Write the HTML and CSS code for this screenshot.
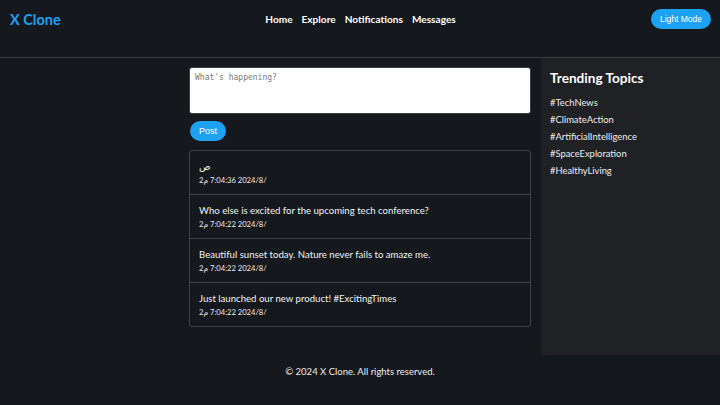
FILE: index.html
```html
<!DOCTYPE html>
<html lang="en">
<head>
<meta charset="utf-8">
<title>X Clone</title>
<link rel="stylesheet" href="styles.css">
</head>
<body>
<header class="header">
  <div class="logo">X Clone</div>
  <nav class="nav">
    <a href="#">Home</a>
    <a href="#">Explore</a>
    <a href="#">Notifications</a>
    <a href="#">Messages</a>
  </nav>
  <div class="header-right"><button class="mode-btn">Light Mode</button></div>
</header>
<main class="layout">
  <div class="spacer"></div>
  <section class="feed">
    <textarea class="composer" placeholder="What's happening?"></textarea>
    <button class="post-btn">Post</button>
    <div class="posts">
      <div class="post">
        <div class="post-text">ص</div>
        <div class="post-time"><bdo dir="ltr">2م 7:04:36 2024/8/</bdo></div>
      </div>
      <div class="post">
        <div class="post-text">Who else is excited for the upcoming tech conference?</div>
        <div class="post-time"><bdo dir="ltr">2م 7:04:22 2024/8/</bdo></div>
      </div>
      <div class="post">
        <div class="post-text">Beautiful sunset today. Nature never fails to amaze me.</div>
        <div class="post-time"><bdo dir="ltr">2م 7:04:22 2024/8/</bdo></div>
      </div>
      <div class="post">
        <div class="post-text">Just launched our new product! #ExcitingTimes</div>
        <div class="post-time"><bdo dir="ltr">2م 7:04:22 2024/8/</bdo></div>
      </div>
    </div>
  </section>
  <aside class="sidebar">
    <h2 class="sidebar-title">Trending Topics</h2>
    <ul class="topics">
      <li>#TechNews</li>
      <li>#ClimateAction</li>
      <li>#ArtificialIntelligence</li>
      <li>#SpaceExploration</li>
      <li>#HealthyLiving</li>
    </ul>
  </aside>
</main>
<footer class="footer">© 2024 X Clone. All rights reserved.</footer>
</body>
</html>
```

FILE: styles.css
```css
* { box-sizing: border-box; }
html, body { margin: 0; padding: 0; }
body {
  background: #15181c;
  color: #e7e9ea;
  font-family: Lato, "DejaVu Sans", sans-serif;
  width: 720px;
  height: 405px;
  overflow: hidden;
}
.header {
  height: 58px;
  border-bottom: 1px solid #3a3d41;
  display: grid;
  grid-template-columns: 1fr auto 1fr;
  align-items: start;
  padding: 9px 9px 0 10px;
}
.logo {
  color: #1da1f2;
  font-weight: 700;
  font-size: 14.5px;
  line-height: 21px;
}
.nav {
  display: flex;
  gap: 9px;
  line-height: 20px;
}
.nav a {
  color: #fff;
  text-decoration: none;
  font-weight: 700;
  font-size: 10.1px;
}
.header-right { display: flex; justify-content: flex-end; }
.mode-btn {
  background: #1da1f2;
  color: #fff;
  border: none;
  border-radius: 10px;
  height: 20px;
  padding: 0 9px;
  font-family: "Liberation Sans", Arial, sans-serif;
  font-size: 8.5px;
}
.layout {
  display: grid;
  grid-template-columns: 179px 342px 1fr;
  column-gap: 10px;
  align-items: start;
}
.feed {
  padding-top: 9px;
  display: flex;
  flex-direction: column;
  align-items: flex-start;
}
.composer {
  width: 342px;
  height: 47px;
  border: 1px solid #3a3d41;
  border-radius: 3px;
  background: #fff;
  padding: 5px;
  resize: none;
  font-family: "DejaVu Sans Mono", monospace;
  font-size: 8px;
  display: block;
}
.composer::placeholder { color: #777; }
.post-btn {
  margin-top: 7px;
  background: #1da1f2;
  color: #fff;
  border: none;
  border-radius: 10px;
  height: 20px;
  padding: 0 9px;
  font-family: "Liberation Sans", Arial, sans-serif;
  font-size: 9px;
  margin-left: 1px;
}
.posts {
  margin-top: 9px;
  width: 342px;
  border: 1px solid #3e434a;
  border-radius: 3px;
}
.post {
  height: 44px;
  padding: 9px 9px 0 9px;
  border-bottom: 1px solid #3e434a;
}
.post:last-child { border-bottom: none; height: 43px; }
.post-text { font-size: 9.6px; line-height: 14px; color: #f2f4f5; }
.post-time { font-size: 7.6px; line-height: 12px; color: #eceef0; }
.sidebar {
  background: #1f2124;
  height: 297px;
  border-radius: 0 0 0 4px;
  padding: 11px 9px;
}
.sidebar-title {
  margin: 0;
  font-size: 13.6px;
  font-weight: 700;
  color: #fff;
  line-height: 18px;
}
.topics {
  list-style: none;
  margin: 7px 0 0 0;
  padding: 0;
}
.topics li {
  font-size: 9.4px;
  line-height: 17px;
  color: #eceef0;
}
.footer {
  text-align: center;
  font-size: 9.5px;
  line-height: 14px;
  padding-top: 10px;
  color: #eceef0;
}
```
